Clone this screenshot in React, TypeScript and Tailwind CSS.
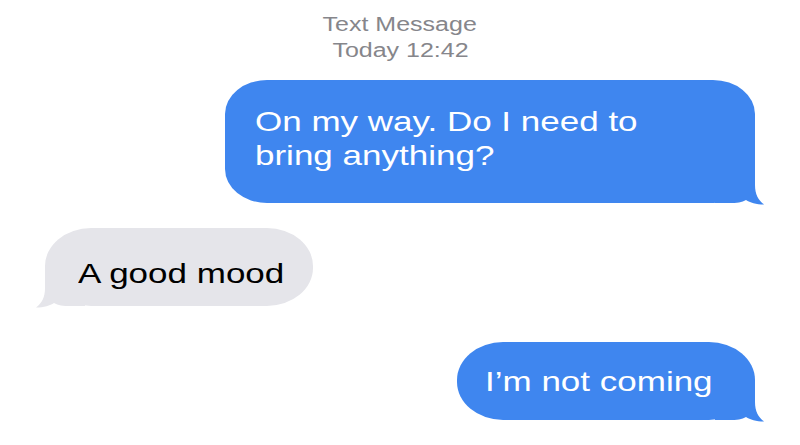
import React from 'react'

// the screenshot is stretched horizontally, so text gets a matching scale-x
function Tail({ color, side }: { color: string; side: 'left' | 'right' }) {
  return (
    <svg
      width="50"
      height="40"
      viewBox="0 0 50 40"
      className={
        side === 'right'
          ? 'absolute right-[-10px] bottom-[-2px]'
          : 'absolute left-[-10px] bottom-[-2px] -scale-x-100'
      }
    >
      <path
        d="M0 0 H40 V20 C40 29 43 35 49 39.5 C41 39.5 35 37.5 31 35 C27 37.5 22 38 14 38 H0 Z"
        fill={color}
      />
    </svg>
  )
}

export default function App() {
  return (
    <div className="w-[800px] h-[445px] bg-white overflow-hidden font-['Liberation_Sans',Arial,sans-serif]">
      {/* Header */}
      <div className="flex flex-col items-center pt-[11px] text-[20px] leading-[26px] text-[#86868b]">
        <span className="inline-block scale-x-125">Text Message</span>
        <span className="inline-block scale-x-125">Today 12:42</span>
      </div>

      {/* Outgoing */}
      <div className="flex justify-end pr-[45px] mt-[17px]">
        <div className="relative w-[530px] h-[123px] bg-[#3f86ef] rounded-[42px_/_34px] pl-[30px] pt-[25px] text-white text-[28px] leading-[34px]">
          <Tail color="#3f86ef" side="right" />
          <span className="relative block w-[320px] origin-left scale-x-125">
            On my way. Do I need to bring anything?
          </span>
        </div>
      </div>

      {/* Incoming */}
      <div className="flex justify-start pl-[45px] mt-[25px]">
        <div className="relative w-[268px] h-[78px] bg-[#e5e5ea] rounded-[46px_/_38px] pl-[33px] pt-[29px] text-black text-[28px] leading-[34px]">
          <Tail color="#e5e5ea" side="left" />
          <span className="relative block origin-left scale-x-125">A good mood</span>
        </div>
      </div>

      {/* Outgoing */}
      <div className="flex justify-end pr-[45px] mt-[36px]">
        <div className="relative w-[298px] h-[78px] bg-[#3f86ef] rounded-[46px_/_38px] pl-[28px] pt-[23px] text-white text-[28px] leading-[34px]">
          <Tail color="#3f86ef" side="right" />
          <span className="relative block origin-left scale-x-125">I’m not coming</span>
        </div>
      </div>
    </div>
  )
}
